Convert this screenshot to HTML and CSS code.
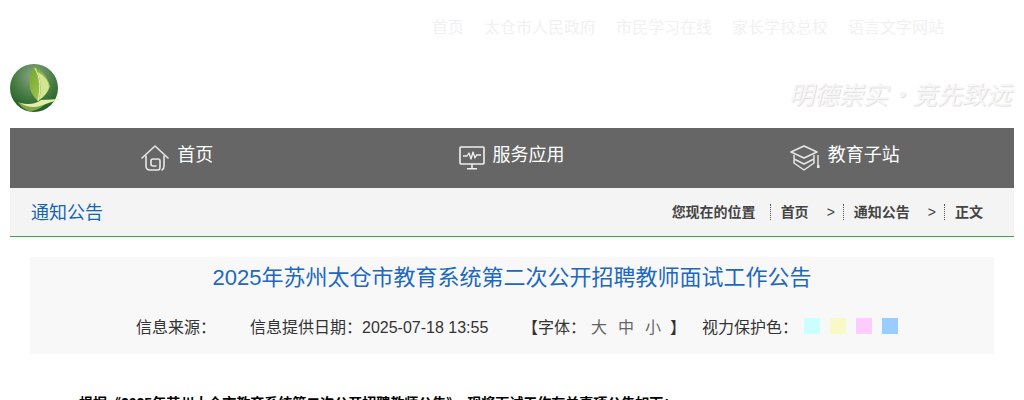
FILE: index.html

```html
<!DOCTYPE html>
<html lang="zh-CN">
<head>
  <meta charset="UTF-8">
  <title>2025年苏州太仓市教育系统第二次公开招聘教师面试工作公告</title>
  <link rel="stylesheet" href="styles.css">
</head>
<body>
  <div class="wrap">
    <div class="top-links">
      <a>首页</a>
      <a>太仓市人民政府</a>
      <a>市民学习在线</a>
      <a>家长学校总校</a>
      <a>语言文字网站</a>
    </div>

    <div class="brand">
      <svg class="logo" viewBox="0 0 52 50" width="52" height="50">
        <defs>
          <radialGradient id="ball" cx="0.5" cy="0.25" r="0.8">
            <stop offset="0" stop-color="#8fa68b"/>
            <stop offset="0.5" stop-color="#4a7f46"/>
            <stop offset="1" stop-color="#1d5622"/>
          </radialGradient>
          <linearGradient id="leaf" x1="0" y1="0" x2="1" y2="1">
            <stop offset="0" stop-color="#6fa52c"/>
            <stop offset="1" stop-color="#b4d05a"/>
          </linearGradient>
        </defs>
        <circle cx="24" cy="24" r="24" fill="url(#ball)"/>
        <path d="M8 38 Q24 45 40 36 Q30 46 21 47.5 Q13 46 8 38 Z" fill="#9cbf52" opacity="0.75"/>
        <path d="M10 39 Q23 42 31 36 L51 35 Q38 39 30 42 Q20 45 10 39 Z" fill="#e3edaa"/>
        <path d="M24 2 Q18 12 20 24 Q22 32 28 37 Q38 30 40 22 Q37 10 24 2 Z" fill="url(#leaf)"/>
        <path d="M28 8 Q38 14 39 23 Q37 31 29 36 Q33 24 28 8 Z" fill="#d3e495"/>
        <path d="M25 4 Q33 18 28 37" fill="none" stroke="#eef4c4" stroke-width="1"/>
      </svg>
      <div class="motto">明德崇实·竞先致远</div>
    </div>

    <div class="main-nav">
      <a class="nav-item">
        <svg viewBox="0 0 28 26" width="28" height="26" fill="none" stroke="#e8e8e8" stroke-width="1.6" stroke-linecap="round" stroke-linejoin="round">
          <path d="M1 13 L14 1 L27 13"/>
          <path d="M5 11 V21 Q5 25 9 25 H17 Q19 25 19 22 V16 Q19 14 17 14 H12 Q10 14 10 16 V19 Q10 21 12 21 H15"/>
          <path d="M23 11 V21 Q23 24 21 25"/>
        </svg>
        <span>首页</span>
      </a>
      <a class="nav-item">
        <svg viewBox="0 0 26 24" width="26" height="24" fill="none" stroke="#f0f0f0" stroke-width="1.6" stroke-linejoin="round">
          <rect x="1" y="1" width="24" height="17" rx="1"/>
          <path d="M4 10 H8 L10 7 L12 13 L14 6 L16 12 L17.5 9 H22" stroke-width="1.3"/>
          <path d="M13 18 V22.5 M8 22.8 H18"/>
        </svg>
        <span>服务应用</span>
      </a>
      <a class="nav-item">
        <svg viewBox="0 0 30 26" width="30" height="26" fill="none" stroke="#e8e8e8" stroke-width="1.5" stroke-linejoin="round">
          <path d="M1 7 L14 1 L27 7 L14 13 Z"/>
          <path d="M4 10 V14 L14 19 L24 14 V10"/>
          <path d="M4 15 V18 L14 25 L24 18 V15"/>
          <path d="M28 10 V20" stroke-width="1.4"/>
          <path d="M27 20 H29.5 V23 H27 Z" fill="#e8e8e8" stroke="none"/>
        </svg>
        <span>教育子站</span>
      </a>
    </div>

    <div class="crumb-bar">
      <div class="crumb-title">通知公告</div>
      <div class="crumbs">
        <span class="crumb-label">您现在的位置</span>
        <a class="crumb">首页</a>
        <span class="crumb-arrow">&gt;</span>
        <a class="crumb">通知公告</a>
        <span class="crumb-arrow">&gt;</span>
        <a class="crumb">正文</a>
      </div>
    </div>

    <div class="article-head">
      <h1>2025年苏州太仓市教育系统第二次公开招聘教师面试工作公告</h1>
      <div class="meta">
        <span class="source">信息来源：</span>
        <span class="date">信息提供日期：2025-07-18 13:55</span>
        <span class="font-size">【字体：<a>大</a><a>中</a><a>小</a>】</span>
        <span class="eye">视力保护色：</span>
        <span class="swatches">
          <i class="swatch cyan"></i>
          <i class="swatch yellow"></i>
          <i class="swatch pink"></i>
          <i class="swatch blue"></i>
        </span>
      </div>
    </div>

    <p class="lead">根据《2025年苏州太仓市教育系统第二次公开招聘教师公告》，现将面试工作有关事项公告如下：</p>
  </div>
</body>
</html>
```

FILE: styles.css

```css
* {
  margin: 0;
  padding: 0;
  box-sizing: border-box;
}

body {
  font-family: "Liberation Sans", "Noto Sans CJK SC", sans-serif;
  background: #fff;
  color: #333;
}

.wrap {
  width: 1004px;
  margin-left: 10px;
}

.top-links {
  display: flex;
  justify-content: flex-end;
  gap: 20px;
  height: 56px;
  padding: 18px 70px 0 0;
  font-size: 16px;
  line-height: 20px;
  color: #f0f1f2;
}

.brand {
  display: flex;
  justify-content: space-between;
  height: 72px;
}

.logo {
  margin-top: 8px;
}

.motto {
  margin: 20px 3px 0 0;
  font-family: "Noto Sans CJK SC", sans-serif;
  font-size: 25px;
  line-height: 34px;
  font-style: italic;
  letter-spacing: -0.3px;
  color: #f6f6f6;
  text-shadow: 1px 1px 1px #ddd;
  white-space: nowrap;
}

.main-nav {
  display: grid;
  grid-template-columns: repeat(3, 1fr);
  height: 60px;
  background: #666;
  color: #fff;
  font-size: 18px;
}

.nav-item {
  display: flex;
  align-items: center;
  justify-content: center;
  gap: 8px;
}

.nav-item:nth-child(2) {
  gap: 7px;
}

.nav-item:last-child {
  padding-right: 4px;
}

.nav-item span {
  margin-top: -10px;
}

.crumb-bar {
  display: flex;
  align-items: center;
  justify-content: space-between;
  height: 49px;
  padding: 0 31px 0 21px;
  background: #f4f4f4;
  border-bottom: 1px solid #3aa648;
}

.crumb-title {
  margin-top: -2px;
  font-size: 18px;
  color: #1565b5;
}

.crumbs {
  display: flex;
  align-items: center;
  font-size: 14px;
  font-weight: bold;
  line-height: 16px;
  color: #444;
}

.crumb-label {
  margin-right: 14px;
}

.crumb {
  border-left: 1px dotted #555;
  padding-left: 10px;
}

.crumb-arrow {
  font-weight: normal;
  margin: 0 8px 0 18px;
}

.article-head {
  margin: 20px 20px 0;
  height: 97px;
  padding-top: 6px;
  background: #f8f8f8;
}

.article-head h1 {
  font-size: 22px;
  font-weight: normal;
  line-height: 30px;
  text-align: center;
  color: #2068bf;
}

.meta {
  display: flex;
  align-items: center;
  margin-top: 24px;
  padding-left: 106px;
  font-size: 16px;
  line-height: 22px;
  color: #333;
}

.source {
  width: 114px;
}

.date {
  width: 272px;
}

.font-size {
  width: 180px;
}

.font-size a {
  margin: 0 11px 0 0;
  color: #666;
}

.font-size a:first-child {
  margin-left: 5px;
}

.font-size a:last-child {
  margin-right: 9px;
}

.eye {
  width: 102px;
}

.swatches {
  display: flex;
  gap: 10px;
  margin-top: -4px;
}

.swatch {
  width: 16px;
  height: 16px;
}

.cyan { background: #ccffff; }
.yellow { background: #f9f9c5; }
.pink { background: #ffccff; }
.blue { background: #99ccff; }

.lead {
  margin: 37px 0 0 69px;
  font-size: 14px;
  font-weight: bold;
  line-height: 24px;
  color: #000;
  white-space: nowrap;
}
```
